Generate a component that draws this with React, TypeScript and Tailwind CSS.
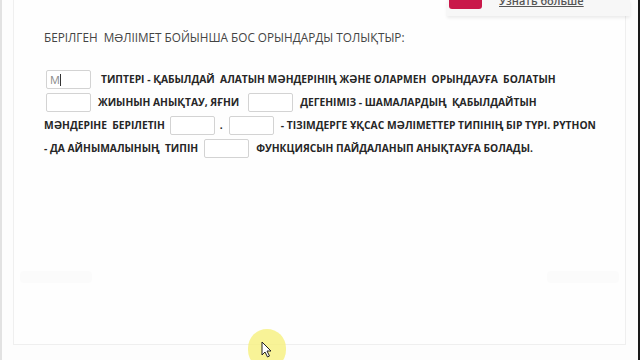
import React from 'react';

const body = "font-['Open_Sans',sans-serif] font-bold text-[10.25px] text-[#262626] whitespace-pre";

const Blank = ({ value, className = '' }: { value?: string; className?: string }) => (
  <div
    className={`w-[45px] h-[19px] shrink-0 border border-[#d3d3d3] rounded-[2px] bg-white flex items-center px-[3px] ${className}`}
  >
    {value && (
      <>
        <span className="font-['Open_Sans',sans-serif] text-[11px] text-[#8a8a8a] leading-none">{value}</span>
        <span className="w-px h-[12px] bg-[#333]" />
      </>
    )}
  </div>
);

const Txt = ({ children }: { children: string }) => <span className={body}>{children}</span>;

export default function App() {
  return (
    <div className="relative w-[640px] h-[360px] overflow-hidden bg-[#fdfdfd] border-l-2 border-l-[#e2e2e2] border-r-2 border-r-[#1a1a1a]">
      {/* main panel */}
      <div className="absolute left-[11px] right-[12px] top-[-2px] h-[347px] border border-[#efefef] bg-[#fefefe]">
        <div className="pt-[29px] pl-[30px]">
          <h2 className="font-['Open_Sans',sans-serif] text-[11.75px] text-[#444] whitespace-pre leading-[18px]">
            БЕРІЛГЕН  МƏЛІІМЕТ БОЙЫНША БОС ОРЫНДАРДЫ ТОЛЫҚТЫР:
          </h2>

          <div className="mt-[22px] flex flex-col">
            <div className="flex items-center h-[23px]">
              <Blank value="M" className="ml-[2px] mr-[10px]" />
              <Txt>ТИПТЕРІ - ҚАБЫЛДАЙ  АЛАТЫН МӘНДЕРІНІҢ ЖӘНЕ ОЛАРМЕН  ОРЫНДАУҒА  БОЛАТЫН</Txt>
            </div>
            <div className="flex items-center h-[23px]">
              <Blank className="ml-[2px] mr-[7px]" />
              <Txt>ЖИЫНЫН АНЫҚТАУ, ЯҒНИ</Txt>
              <Blank className="ml-[9px] mr-[7px]" />
              <Txt>ДЕГЕНІМІЗ - ШАМАЛАРДЫҢ  ҚАБЫЛДАЙТЫН</Txt>
            </div>
            <div className="flex items-center h-[23px]">
              <Txt>МӘНДЕРІНЕ  БЕРІЛЕТІН</Txt>
              <Blank className="ml-[5px] mr-[5px]" />
              <Txt>.</Txt>
              <Blank className="ml-[6px] mr-[7px]" />
              <Txt>- ТІЗІМДЕРГЕ ҰҚСАС МӘЛІМЕТТЕР ТИПІНІҢ БІР ТҮРІ. PYTHON</Txt>
            </div>
            <div className="flex items-center h-[23px]">
              <Txt>- ДА АЙНЫМАЛЫНЫҢ  ТИПІН</Txt>
              <Blank className="ml-[6px] mr-[7px]" />
              <Txt>ФУНКЦИЯСЫН ПАЙДАЛАНЫП АНЫҚТАУҒА БОЛАДЫ.</Txt>
            </div>
          </div>
        </div>

        {/* faint footer */}
        <div className="absolute left-[6px] right-[6px] top-[272px] flex justify-between">
          <div className="w-[72px] h-[12px] bg-[#fbfbfb] rounded-sm" />
          <div className="w-[72px] h-[12px] bg-[#fbfbfb] rounded-sm" />
        </div>
      </div>

      {/* notice card at top right */}
      <div className="absolute left-[445px] top-0 w-[183px] h-[16px] bg-[#f7f7f7] shadow-[0_2px_3px_rgba(0,0,0,0.08)] flex items-start">
        <div className="ml-[2px] w-[33px] h-[9px] bg-[#c9184a] rounded-b-[3px]" />
        <span className="ml-[17px] mt-[-5px] font-['Open_Sans',sans-serif] font-semibold text-[11px] text-[#555] underline leading-[12px]">
          Узнать больше
        </span>
      </div>

      {/* mouse cursor highlight */}
      <div className="absolute left-[246px] top-[329px] w-[38px] h-[40px] rounded-full bg-[#f6f07d]/80" />
      <svg className="absolute left-[259px] top-[341px]" width="11" height="17" viewBox="0 0 11 17">
        <path d="M1 1 L1 14 L4 11 L6.5 16 L8.5 15 L6 10 L10 10 Z" fill="#fff" stroke="#222" strokeWidth="1" strokeLinejoin="round" />
      </svg>
    </div>
  );
}
